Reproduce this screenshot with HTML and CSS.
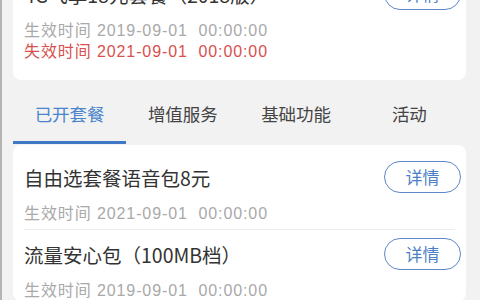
FILE: index.html
```html
<!DOCTYPE html>
<html lang="zh-CN">
<head>
<meta charset="utf-8">
<link rel="stylesheet" href="styles.css">
</head>
<body>
<div class="page">
  <section class="card card-top">
    <div class="item">
      <div class="row">
        <div class="title">4G飞享18元套餐（2018版）</div>
        <button class="btn">详情</button>
      </div>
      <div class="date">生效时间 2019-09-01&nbsp; 00:00:00</div>
      <div class="date red">失效时间 2021-09-01&nbsp; 00:00:00</div>
    </div>
  </section>

  <nav class="tabs">
    <div class="tab active">已开套餐</div>
    <div class="tab">增值服务</div>
    <div class="tab">基础功能</div>
    <div class="tab">活动</div>
  </nav>

  <section class="card card-list">
    <div class="item sep">
      <div class="row">
        <div class="title">自由选套餐语音包8元</div>
        <button class="btn">详情</button>
      </div>
      <div class="date">生效时间 2021-09-01&nbsp; 00:00:00</div>
    </div>
    <div class="item">
      <div class="row">
        <div class="title">流量安心包（100MB档）</div>
        <button class="btn">详情</button>
      </div>
      <div class="date">生效时间 2019-09-01&nbsp; 00:00:00</div>
    </div>
  </section>
</div>
</body>
</html>
```
FILE: styles.css
```css
* { box-sizing: border-box; }
html, body {
  margin: 0;
  padding: 0;
  width: 480px;
  height: 300px;
  overflow: hidden;
  background: #f2f2f2;
}
body {
  border-left: 2px solid #b4b4b4;
  font-family: "Noto Sans CJK SC", "Noto Sans", sans-serif;
}
.page {
  padding: 0 14px 0 11px;
  margin-top: -22px;
}
.card {
  background: #fff;
  border-radius: 8px;
  padding: 0 11px;
}
.card-top {
  padding-bottom: 18px;
  border-radius: 0 0 8px 8px;
}
.card-list {
  margin-top: 1px;
  padding-top: 8px;
}
.item {
  padding-top: 8px;
}
.card-top .item { padding-top: 0; }
.item.sep {
  border-bottom: 1px solid #ececec;
  padding-bottom: 5px;
}
.row {
  display: flex;
  justify-content: space-between;
  align-items: flex-start;
}
.title {
  margin-top: 3px;
  font-size: 19.5px;
  line-height: 28px;
  color: #333;
}
.btn {
  width: 77px;
  height: 32px;
  margin-right: -6px;
  border: 1.5px solid #5f88c6;
  border-radius: 16px;
  background: #fff;
  color: #4d7fc8;
  font-family: inherit;
  font-size: 17px;
  line-height: 28px;
  padding: 0;
}
.date {
  font-family: "Liberation Sans", "Noto Sans CJK SC", sans-serif;
  font-size: 16px;
  letter-spacing: 0.9px;
  line-height: 21px;
  color: #a9a9a9;
}
.row + .date { margin-top: 10px; }
.date.red { color: #d9504e; }
.tabs {
  display: grid;
  grid-template-columns: repeat(4, 1fr);
}
.tab {
  text-align: center;
  font-size: 17.5px;
  line-height: 24px;
  padding: 22px 0 15px;
  color: #444;
  border-bottom: 3px solid transparent;
}
.tab.active {
  color: #4a85cc;
  border-bottom-color: #3f78c4;
}
```
